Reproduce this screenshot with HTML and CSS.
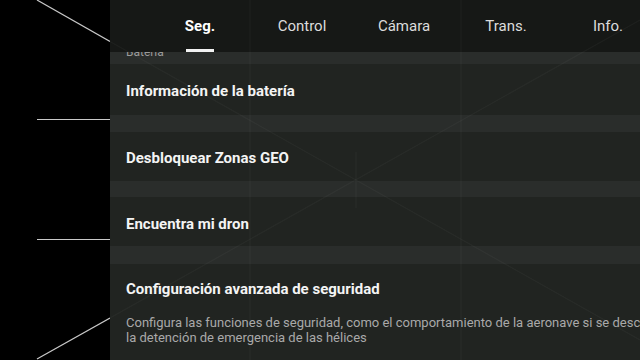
FILE: index.html
```html
<!DOCTYPE html>
<html lang="es">
<head>
<meta charset="utf-8">
<title>Seguridad</title>
<link rel="stylesheet" href="styles.css">
</head>
<body>
<div class="screen">
  <aside class="view">
    <svg class="view-lines" width="110" height="360" viewBox="0 0 110 360">
      <line x1="37" y1="0" x2="110" y2="41.5" />
      <line x1="37" y1="119.5" x2="110" y2="119.5" />
      <line x1="37" y1="239.5" x2="110" y2="239.5" />
      <line x1="37" y1="359" x2="110" y2="318" />
    </svg>
  </aside>
  <main class="panel">
    <nav class="tabs">
      <div class="tab active">Seg.</div>
      <div class="tab">Control</div>
      <div class="tab">Cámara</div>
      <div class="tab">Trans.</div>
      <div class="tab">Info.</div>
    </nav>
    <section class="content">
      <div class="band band-top"><span class="group-label">Batería</span></div>
      <div class="row row-a"><span class="row-title">Información de la batería</span></div>
      <div class="band band-a"></div>
      <div class="row row-b"><span class="row-title">Desbloquear Zonas GEO</span></div>
      <div class="band band-b"></div>
      <div class="row row-c"><span class="row-title">Encuentra mi dron</span></div>
      <div class="band band-c"></div>
      <div class="row-tall">
        <div class="row-title">Configuración avanzada de seguridad</div>
        <p class="row-desc">Configura las funciones de seguridad, como el comportamiento de la aeronave si se desconecta y<br>la detención de emergencia de las hélices</p>
      </div>
    </section>
    <svg class="ghost" width="530" height="360" viewBox="110 0 530 360">
      <line x1="110" y1="41.5" x2="640" y2="340" />
      <line x1="110" y1="318" x2="640" y2="20" />
      <line x1="250" y1="0" x2="250" y2="360" />
      <line x1="461" y1="0" x2="461" y2="360" />
      <line x1="356" y1="152" x2="356" y2="208" />
    </svg>
  </main>
</div>
</body>
</html>
```

FILE: styles.css
```css
* { box-sizing: border-box; }
html, body {
  margin: 0;
  padding: 0;
  background: #000;
}
.screen {
  width: 640px;
  height: 360px;
  display: flex;
  overflow: hidden;
  font-family: Roboto, "Noto Sans", "Liberation Sans", sans-serif;
}
.view {
  width: 110px;
  flex: none;
  background: #000;
}
.view-lines {
  display: block;
}
.view-lines line {
  stroke: #c9c9c9;
  stroke-width: 1.2;
}
.panel {
  flex: 1;
  display: flex;
  flex-direction: column;
  background: #212421;
  position: relative;
  overflow: hidden;
}
.tabs {
  height: 52px;
  flex: none;
  display: flex;
  padding-left: 39px;
  background: #161816;
  position: relative;
  z-index: 2;
}
.tab {
  width: 102px;
  flex: none;
  text-align: center;
  font-size: 15px;
  line-height: 52px;
  color: #dcdcdc;
  position: relative;
}
.tab.active {
  color: #fff;
  font-weight: 700;
}
.tab.active::after {
  content: "";
  position: absolute;
  left: 37px;
  width: 28px;
  bottom: 0;
  height: 3px;
  background: #f2f2f2;
}
.content {
  flex: 1;
  overflow: hidden;
}
.band {
  background: #2a2d2b;
}
.band-top {
  height: 12px;
  overflow: hidden;
  padding-left: 16px;
}
.group-label {
  display: block;
  margin-top: -7px;
  font-size: 12px;
  line-height: 14px;
  color: #9a9a9a;
}
.band-a { height: 17px; }
.band-b { height: 16px; }
.band-c { height: 18px; }
.row {
  height: 49px;
  display: flex;
  align-items: center;
  padding-left: 16px;
}
.row-a {
  height: 51px;
  padding-top: 3px;
}
.row-b {
  padding-top: 3px;
}
.row-c {
  padding-top: 5px;
}
.row-title {
  font-size: 15px;
  font-weight: 700;
  color: #f4f4f4;
  white-space: nowrap;
}
.row-tall {
  padding: 16px 0 0 16px;
}
.row-tall .row-title {
  line-height: 18px;
}
.row-desc {
  margin: 17px 0 0;
  font-size: 13px;
  line-height: 15px;
  color: #a9a9a9;
  white-space: nowrap;
}
.ghost {
  position: absolute;
  left: 0;
  top: 0;
  pointer-events: none;
  z-index: 3;
}
.ghost line {
  stroke: rgba(255, 255, 255, 0.035);
  stroke-width: 1.2;
}
```
